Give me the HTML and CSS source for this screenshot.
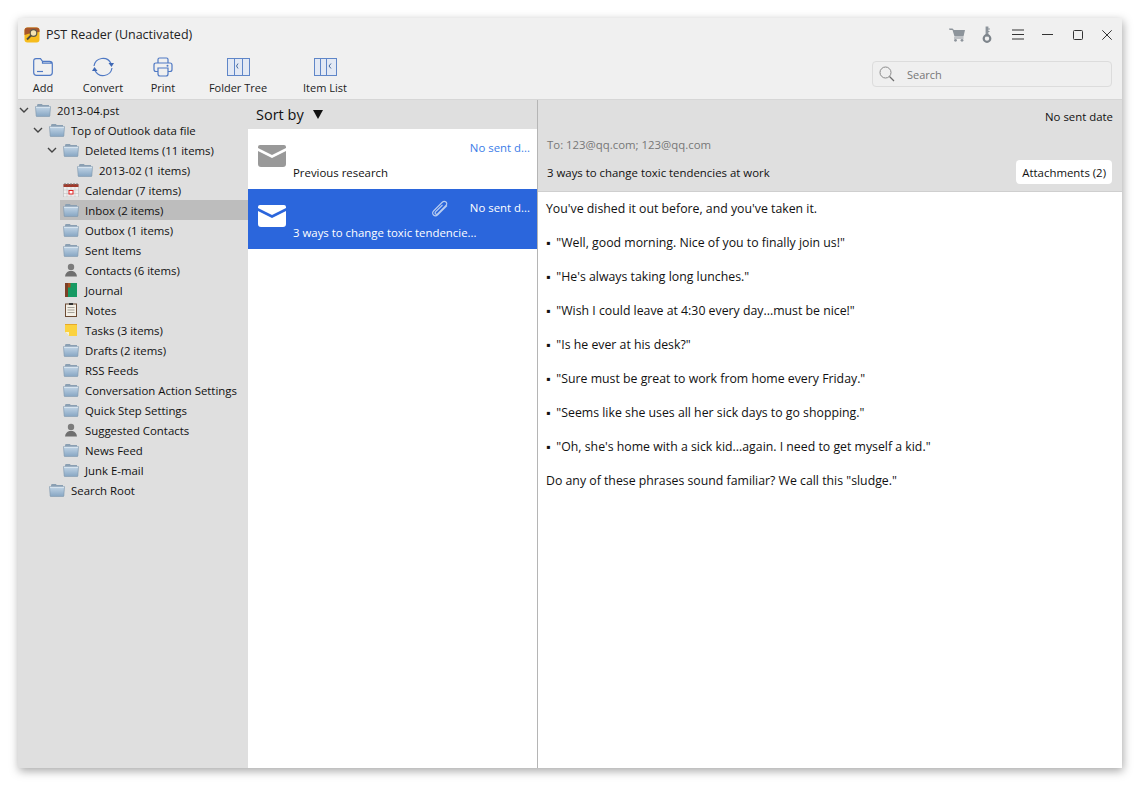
FILE: index.html
```html
<!DOCTYPE html>
<html lang="en">
<head>
    <meta charset="UTF-8">
    <title>PST Reader (Unactivated)</title>
    <link rel="stylesheet" href="styles.css">
</head>
<body>
    <svg class="sprites" width="0" height="0">
        <defs>
            <linearGradient id="fold" x1="0" y1="0" x2="0" y2="1">
                <stop offset="0" stop-color="#c3d6e7"/>
                <stop offset="1" stop-color="#86a5c2"/>
            </linearGradient>
            <symbol id="folder" viewBox="0 0 16 14">
                <path d="M2 2.5 L2.6 1 H7 L7.6 2 H14 V4 H2 Z" fill="#8a9fb2"/>
                <path d="M0.5 3.6 H15.5 L14.8 13 Q14.7 13.6 14 13.6 H2 Q1.3 13.6 1.2 13 Z" fill="url(#fold)" stroke="#7b93a9" stroke-width="0.6"/>
                <path d="M1 4.3 H15" stroke="#e6eff6" stroke-width="0.8"/>
            </symbol>
            <symbol id="contact" viewBox="0 0 16 14">
                <circle cx="8" cy="4" r="3.2" fill="#7c7c7c"/>
                <path d="M2 13.5 Q2.5 9 6.4 8 H9.6 Q13.5 9 14 13.5 Z" fill="#6f6f6f"/>
            </symbol>
        </defs>
    </svg>

    <div class="window">
        <header class="titlebar">
            <svg class="app-logo" width="16" height="16" viewBox="0 0 16 16">
                <rect x="0.5" y="0.5" width="15" height="15" rx="3" fill="#f6bc1d"/>
                <path d="M0.5 8 V3.5 Q0.5 0.5 3.5 0.5 H12.5 Q15.500 0.5 15.500 3.5 V5 Q8 5 0.5 8Z" fill="#a8562a"/>
                <circle cx="9.500" cy="6" r="3.300" fill="#f4e3b0" stroke="#5d5a4a" stroke-width="1.200"/>
                <path d="M7 8.500 L3 12.500" stroke="#4b4b3f" stroke-width="1.800"/>
            </svg>
            <span class="app-title">PST Reader (Unactivated)</span>
            <div class="window-btns">
                <svg class="btn-cart" width="16" height="14" viewBox="0 0 16 14"><path d="M0 0.500 H3.500 L5 2 H16 L14.500 8.500 H5.500 L3.500 2 H0.500 Z" fill="#8d949b"/><rect x="5" y="9.500" width="9.500" height="1" fill="#8d949b"/><circle cx="6.500" cy="12.300" r="1.400" fill="#8d949b"/><circle cx="13" cy="12.300" r="1.400" fill="#8d949b"/></svg>
                <svg class="btn-key" width="10" height="17" viewBox="0 0 10 17"><rect x="3.600" y="0.500" width="2.800" height="10" fill="#8d949b"/><path d="M6 3 H8 M6 5.500 H7.500" stroke="#8d949b"/><circle cx="5" cy="12.500" r="3.300" fill="none" stroke="#7d848b" stroke-width="2.200"/></svg>
                <svg class="btn-menu" width="12" height="11" viewBox="0 0 12 11"><path d="M0 1 H12 M0 5.500 H12 M0 10 H12" stroke="#333" stroke-width="1"/></svg>
                <svg class="btn-min" width="11" height="11" viewBox="0 0 11 11"><path d="M0 5.500 H11" stroke="#333" stroke-width="1"/></svg>
                <svg class="btn-max" width="10" height="10" viewBox="0 0 10 10"><rect x="0.500" y="0.500" width="9" height="9" rx="1" fill="none" stroke="#333"/></svg>
                <svg class="btn-close" width="10" height="10" viewBox="0 0 10 10"><path d="M0.300 0.300 L9.700 9.700 M9.700 0.300 L0.300 9.700" stroke="#333" stroke-width="1"/></svg>
            </div>
        </header>

        <div class="toolbar">
            <div class="tool tool-add">
                <svg width="20" height="18" viewBox="0 0 20 18"><path d="M0.700 3 Q0.700 0.700 3 0.700 H7.500 L9.500 3.300 H16.500 Q19.300 3.300 19.300 6 V14.500 Q19.300 17.300 16.500 17.300 H3.500 Q0.700 17.300 0.700 14.500 Z M9.500 3.300 V5.200 H19.300" fill="none" stroke="#4f79c4" stroke-width="1.200"/><path d="M4 13.500 H10" stroke="#4f79c4" stroke-width="1.200"/></svg>
                <span>Add</span>
            </div>
            <div class="tool tool-convert">
                <svg width="24" height="20" viewBox="0 0 24 20"><path d="M3 9 A9 9 0 0 1 20 6.500 M21 11 A9 9 0 0 1 4 13.500" fill="none" stroke="#4f79c4" stroke-width="1.200"/><path d="M17.500 6 L23 6 L20.500 10 Z M1 14 L6.500 14 L3.500 10 Z" fill="#3f68b4"/></svg>
                <span>Convert</span>
            </div>
            <div class="tool tool-print">
                <svg width="20" height="20" viewBox="0 0 20 20"><path d="M5 6 V2.500 Q5 1 6.500 1 H13.500 Q15 1 15 2.500 V6 M5 14.500 H3 Q1 14.500 1 12.500 V8 Q1 6 3 6 H17 Q19 6 19 8 V12.500 Q19 14.500 17 14.500 H15 M5 11 H15 V17 Q15 19 13 19 H7 Q5 19 5 17 Z" fill="none" stroke="#4f79c4" stroke-width="1.200"/><circle cx="14.500" cy="8.800" r="1" fill="#4f79c4"/></svg>
                <span>Print</span>
            </div>
            <div class="tool tool-tree">
                <svg width="23" height="18" viewBox="0 0 23 18"><rect x="0.500" y="0.500" width="22" height="17" fill="#e3e9f4" stroke="#5f86c8"/><path d="M7.500 1 V17 M15.500 1 V17" stroke="#5f86c8"/><path d="M11 5.500 L9.500 8 L11 10.500" fill="none" stroke="#44699f"/></svg>
                <span>Folder Tree</span>
            </div>
            <div class="tool tool-list">
                <svg width="23" height="18" viewBox="0 0 23 18"><rect x="0.500" y="0.500" width="22" height="17" fill="#e3e9f4" stroke="#5f86c8"/><path d="M6.500 1 V17 M12.500 1 V17" stroke="#5f86c8"/><path d="M17 5.500 L15 8 L17 10.500" fill="none" stroke="#44699f"/></svg>
                <span>Item List</span>
            </div>
            <div class="search">
                <svg width="16" height="16" viewBox="0 0 16 16"><circle cx="6.500" cy="6.500" r="5.500" fill="none" stroke="#8a8a8a"/><path d="M10.500 10.500 L15 15" stroke="#6e6e6e" stroke-width="1.200"/></svg>
                <span>Search</span>
            </div>
        </div>

        <div class="main">
            <aside class="tree">
                <div class="row lvl0"><svg class="chev" viewBox="0 0 10 6"><path d="M1 1 L5 5 L9 1" fill="none" stroke="#444" stroke-width="1.400"/></svg><svg class="ico"><use href="#folder"/></svg>2013-04.pst</div>
                <div class="row lvl1"><svg class="chev" viewBox="0 0 10 6"><path d="M1 1 L5 5 L9 1" fill="none" stroke="#444" stroke-width="1.400"/></svg><svg class="ico"><use href="#folder"/></svg>Top of Outlook data file</div>
                <div class="row lvl2"><svg class="chev" viewBox="0 0 10 6"><path d="M1 1 L5 5 L9 1" fill="none" stroke="#444" stroke-width="1.400"/></svg><svg class="ico"><use href="#folder"/></svg>Deleted Items (11 items)</div>
                <div class="row lvl3"><svg class="ico"><use href="#folder"/></svg>2013-02 (1 items)</div>
                <div class="row lvl2b">
                    <svg class="ico" viewBox="0 0 16 14"><rect x="0.500" y="2" width="15" height="12" fill="#eee" stroke="#bbb" stroke-width="0.600"/><rect x="0.500" y="1" width="15" height="3" fill="#a03a2c"/><path d="M2 0 V2 M5 0 V2 M8 0 V2 M11 0 V2 M14 0 V2" stroke="#777"/><path d="M0.500 7 H15.500 M0.500 10.500 H15.500 M4 4 V14 M8 4 V14 M12 4 V14" stroke="#bdbdbd" stroke-width="0.500"/><rect x="6" y="7.500" width="4" height="3.500" fill="#fff" stroke="#e02020"/></svg>Calendar (7 items)</div>
                <div class="row lvl2b selected"><svg class="ico"><use href="#folder"/></svg>Inbox (2 items)</div>
                <div class="row lvl2b"><svg class="ico"><use href="#folder"/></svg>Outbox (1 items)</div>
                <div class="row lvl2b"><svg class="ico"><use href="#folder"/></svg>Sent Items</div>
                <div class="row lvl2b"><svg class="ico"><use href="#contact"/></svg>Contacts (6 items)</div>
                <div class="row lvl2b">
                    <svg class="ico" viewBox="0 0 16 14"><rect x="2" y="0" width="12" height="14" fill="#169a63"/><rect x="2" y="0" width="3" height="14" fill="#7d4026"/><rect x="5" y="0" width="2.500" height="4.500" fill="#a5501f"/></svg>Journal</div>
                <div class="row lvl2b">
                    <svg class="ico" viewBox="0 0 16 14"><rect x="2.500" y="1" width="11" height="12.500" fill="#f3efe6" stroke="#6b4a33"/><rect x="6" y="0" width="4" height="2" fill="#333"/><path d="M4.500 4.500 H11.500 M4.500 7 H11.500 M4.500 9.500 H11.500" stroke="#a7a39a"/></svg>Notes</div>
                <div class="row lvl2b">
                    <svg class="ico" viewBox="0 0 16 14"><path d="M2 1 H14 V13 H6 L2 9 Z" fill="#fbd23f"/><path d="M2 9 H6 V13 Z" fill="#f4efd5"/><rect x="2" y="1" width="12" height="1" fill="#e7a92a"/></svg>Tasks (3 items)</div>
                <div class="row lvl2b"><svg class="ico"><use href="#folder"/></svg>Drafts (2 items)</div>
                <div class="row lvl2b"><svg class="ico"><use href="#folder"/></svg>RSS Feeds</div>
                <div class="row lvl2b"><svg class="ico"><use href="#folder"/></svg>Conversation Action Settings</div>
                <div class="row lvl2b"><svg class="ico"><use href="#folder"/></svg>Quick Step Settings</div>
                <div class="row lvl2b"><svg class="ico"><use href="#contact"/></svg>Suggested Contacts</div>
                <div class="row lvl2b"><svg class="ico"><use href="#folder"/></svg>News Feed</div>
                <div class="row lvl2b"><svg class="ico"><use href="#folder"/></svg>Junk E-mail</div>
                <div class="row lvl1b"><svg class="ico"><use href="#folder"/></svg>Search Root</div>
            </aside>

            <section class="list">
                <div class="sort">Sort by <span class="sort-arrow"></span></div>
                <div class="mail">
                    <svg class="mail-ico" width="28" height="22" viewBox="0 0 28 22"><path d="M2 0 H26 Q28 0 28 2 V3 L14 10 L0 3 V2 Q0 0 2 0 Z M0 6 L14 13 L28 6 V19 Q28 22 25 22 H3 Q0 22 0 19 Z" fill="#999"/></svg>
                    <div class="mail-body">
                        <div class="mail-top"><span class="mail-date">No sent d...</span></div>
                        <div class="mail-subject">Previous research</div>
                    </div>
                </div>
                <div class="mail active">
                    <svg class="mail-ico" width="28" height="22" viewBox="0 0 28 22"><path d="M2 0 H26 Q28 0 28 2 V3 L14 10 L0 3 V2 Q0 0 2 0 Z M0 6 L14 13 L28 6 V19 Q28 22 25 22 H3 Q0 22 0 19 Z" fill="#fff"/></svg>
                    <div class="mail-body">
                        <div class="mail-top">
                            <svg class="clip" width="18" height="18" viewBox="0 0 18 18"><path d="M16 5.500 L7 14.500 Q4.500 17 2.500 15 Q0.500 13 3 10.500 L11 2.500 Q13 0.500 15 2 Q16.800 3.800 14.500 6 L7 13.500 Q5.500 14.800 4.500 13.800 Q3.500 12.800 5 11.300 L11.500 5" fill="none" stroke="#b9cdf0" stroke-width="1.100"/></svg>
                            <span class="mail-date">No sent d...</span>
                        </div>
                        <div class="mail-subject">3 ways to change toxic tendencie...</div>
                    </div>
                </div>
            </section>

            <section class="detail">
                <div class="detail-head">
                    <div class="detail-date">No sent date</div>
                    <div class="detail-to">To: 123@qq.com; 123@qq.com</div>
                    <div class="detail-subject">
                        <span>3 ways to change toxic tendencies at work</span>
                        <span class="attach">Attachments (2)</span>
                    </div>
                </div>
                <div class="detail-body">
                    <p>You've dished it out before, and you've taken it.</p>
                    <p><span class="dot">▪</span>"Well, good morning. Nice of you to finally join us!"</p>
                    <p><span class="dot">▪</span>"He's always taking long lunches."</p>
                    <p><span class="dot">▪</span>"Wish I could leave at 4:30 every day...must be nice!"</p>
                    <p><span class="dot">▪</span>"Is he ever at his desk?"</p>
                    <p><span class="dot">▪</span>"Sure must be great to work from home every Friday."</p>
                    <p><span class="dot">▪</span>"Seems like she uses all her sick days to go shopping."</p>
                    <p><span class="dot">▪</span>"Oh, she's home with a sick kid...again. I need to get myself a kid."</p>
                    <p>Do any of these phrases sound familiar? We call this "sludge."</p>
                </div>
            </section>
        </div>
    </div>
</body>
</html>
```
FILE: styles.css
```css
body {
    margin: 0;
    padding: 18px 25px 22px 18px;
    box-sizing: border-box;
    height: 100vh;
    background: #fff;
    font-family: 'Open Sans', 'Noto Sans', sans-serif;
    font-size: 11.4px;
    color: #111;
}

.sprites {
    position: absolute;
}

.window {
    width: 1104px;
    height: 750px;
    display: flex;
    flex-direction: column;
    background: #fff;
    box-shadow: 1px 3px 9px rgba(0, 0, 0, 0.35);
}

.titlebar {
    height: 33px;
    display: flex;
    align-items: center;
    padding-left: 6px;
    background: #f0f0f0;
    flex-shrink: 0;
}

.app-logo {
    margin-right: 6px;
}

.app-title {
    font-size: 12.5px;
    color: #222;
}

.window-btns {
    margin-left: auto;
    margin-right: 10px;
    display: flex;
    align-items: center;
}

.btn-key { margin-left: 17px; }
.btn-menu { margin-left: 20px; }
.btn-min { margin-left: 18px; }
.btn-max { margin-left: 20px; }
.btn-close { margin-left: 19px; }

.toolbar {
    height: 48px;
    display: flex;
    background: #f0f0f0;
    border-bottom: 1px solid #d6d6d6;
    flex-shrink: 0;
}

.tool {
    display: flex;
    flex-direction: column;
    align-items: center;
    height: 44px;
    font-size: 11px;
    color: #222;
}

.tool svg {
    margin-bottom: auto;
    margin-top: 6px;
}

.tool-add svg,
.tool-tree svg,
.tool-list svg {
    margin-top: 7px;
}

.tool-add { width: 50px; }
.tool-convert { width: 50px; margin-left: 10px; }
.tool-print { width: 30px; margin-left: 20px; }
.tool-tree { width: 62px; margin-left: 29px; }
.tool-list { width: 46px; margin-left: 33px; }

.search {
    margin: 10px 10px 0 auto;
    width: 240px;
    height: 26px;
    box-sizing: border-box;
    border: 1px solid #dcdcdc;
    border-radius: 4px;
    display: flex;
    align-items: center;
    gap: 12px;
    padding-left: 6px;
    color: #777;
    font-size: 11px;
    background: #efefef;
}

.main {
    flex: 1;
    display: flex;
    min-height: 0;
}

.tree {
    width: 230px;
    flex-shrink: 0;
    background: #dfdfdf;
    box-sizing: border-box;
}

.row {
    height: 20px;
    display: flex;
    align-items: center;
    white-space: nowrap;
    color: #111;
}

.chev {
    width: 10px;
    height: 6px;
    margin-right: 6px;
}

.ico {
    width: 16px;
    height: 14px;
    margin-right: 6px;
    flex-shrink: 0;
}

.lvl0 { padding-left: 1px; }
.lvl1 { padding-left: 15px; }
.lvl1b { padding-left: 31px; }
.lvl2 { padding-left: 29px; }
.lvl2b { padding-left: 45px; }
.lvl3 { padding-left: 59px; }

.selected {
    margin-left: 42px;
    padding-left: 3px;
    background: #bdbdbd;
}

.list {
    width: 289px;
    flex-shrink: 0;
    background: #fff;
}

.sort {
    height: 29px;
    box-sizing: border-box;
    padding-left: 8px;
    display: flex;
    align-items: center;
    gap: 9px;
    font-size: 14.5px;
    background: #dfdfdf;
}

.sort-arrow {
    width: 0;
    height: 0;
    border-left: 5px solid transparent;
    border-right: 5px solid transparent;
    border-top: 9px solid #111;
}

.mail {
    height: 60px;
    display: flex;
    box-sizing: border-box;
    padding: 0 7px 0 10px;
}

.mail-ico {
    margin-top: 16px;
    flex-shrink: 0;
}

.mail-body {
    flex: 1;
    margin-left: 7px;
    display: flex;
    flex-direction: column;
}

.mail-top {
    height: 37px;
    display: flex;
    justify-content: flex-end;
    gap: 21px;
    padding-top: 11px;
    box-sizing: border-box;
}

.mail-date {
    color: #3b7de8;
}

.mail-subject {
    line-height: 14px;
}

.active {
    background: #2b66dc;
    color: #fff;
}

.active .mail-date {
    color: #fff;
}

.detail {
    flex: 1;
    display: flex;
    flex-direction: column;
    border-left: 1px solid #b5b5b5;
}

.detail-head {
    height: 92px;
    box-sizing: border-box;
    background: #dfdfdf;
    border-bottom: 1px solid #cfcfcf;
    padding: 9px 9px 0 9px;
}

.detail-date {
    text-align: right;
    line-height: 16px;
}

.detail-to {
    margin-top: 12px;
    line-height: 16px;
    color: #777;
}

.detail-subject {
    display: flex;
    justify-content: space-between;
    align-items: center;
    margin-top: 7px;
}

.attach {
    background: #fff;
    border-radius: 4px;
    padding: 4px 6px 2px;
    margin-right: 1px;
    line-height: 18px;
}

.detail-body {
    flex: 1;
    padding: 9px 8px 0;
    font-size: 12.3px;
}

.detail-body p {
    margin: 0 0 18px;
    line-height: 16px;
}

.dot {
    margin-right: 6px;
}
```
